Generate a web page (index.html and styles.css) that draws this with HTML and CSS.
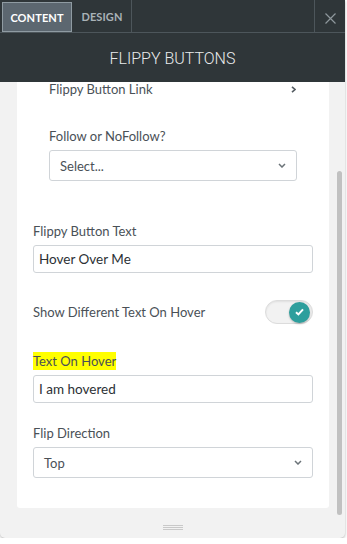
FILE: index.html
```html
<!DOCTYPE html>
<html>
<head>
<meta charset="utf-8">
<link rel="stylesheet" href="styles.css">
</head>
<body>
<div class="panel">
  <div class="header">
    <div class="tabs">
      <div class="tab active">CONTENT</div>
      <div class="tab">DESIGN</div>
      <div class="tab-spacer"></div>
      <div class="close">
        <svg width="11" height="11" viewBox="0 0 11 11"><path d="M0.5 0.5 L10.5 10.5 M10.5 0.5 L0.5 10.5" stroke="#8e979c" stroke-width="1.2" fill="none"/></svg>
      </div>
    </div>
    <div class="title">FLIPPY BUTTONS</div>
  </div>
  <div class="body">
    <div class="card">
      <div class="nested">
        <div class="link-row">
          <span>Flippy Button Link</span>
          <svg class="chev-right" width="5" height="7" viewBox="0 0 5 7"><path d="M1 0.8 L4 3.5 L1 6.2" stroke="#555d63" stroke-width="1.6" fill="none"/></svg>
        </div>
        <div class="field f-follow">
          <div class="label">Follow or NoFollow?</div>
          <div class="select"><span>Select...</span><svg class="chev-down" width="8" height="5" viewBox="0 0 8 5"><path d="M1 1 L4 4 L7 1" stroke="#6b7378" stroke-width="1.5" fill="none"/></svg></div>
        </div>
      </div>
      <div class="main">
        <div class="field f-text">
          <div class="label">Flippy Button Text</div>
          <div class="input">Hover Over Me</div>
        </div>
        <div class="toggle-row">
          <span class="toggle-label">Show Different Text On Hover</span>
          <div class="toggle">
            <div class="knob">
              <svg width="9" height="8" viewBox="0 0 9 8"><path d="M1 4.2 L3.4 6.4 L8 1.4" stroke="#ffffff" stroke-width="2" fill="none"/></svg>
            </div>
          </div>
        </div>
        <div class="field f-hover">
          <div class="label"><span class="hl">Text On Hover</span></div>
          <div class="input">I am hovered</div>
        </div>
        <div class="field f-flip">
          <div class="label">Flip Direction</div>
          <div class="select"><span>Top</span><svg class="chev-down" width="8" height="5" viewBox="0 0 8 5"><path d="M1 1 L4 4 L7 1" stroke="#6b7378" stroke-width="1.5" fill="none"/></svg></div>
        </div>
      </div>
    </div>
    <div class="scrollbar"><div class="thumb"></div></div>
  </div>
  <div class="footer">
    <div class="handle"></div>
  </div>
</div>
</body>
</html>
```

FILE: styles.css
```css
html, body {
  margin: 0;
  padding: 0;
  background: #ffffff;
}
body {
  font-family: Lato, "Liberation Sans", sans-serif;
}
.panel {
  width: 345px;
  height: 538px;
  background: #f2f2f2;
  border-radius: 0 0 5px 5px;
  box-shadow: 0 1px 3px rgba(0, 0, 0, 0.3);
  display: flex;
  flex-direction: column;
  overflow: hidden;
}
.header {
  height: 82px;
  background: #2f3639;
  flex-shrink: 0;
}
.tabs {
  height: 32px;
  border-bottom: 1px solid #4d565b;
  display: flex;
  box-sizing: content-box;
}
.tab {
  width: 59px;
  height: 32px;
  box-sizing: border-box;
  border-right: 1px solid #4d565b;
  display: flex;
  align-items: center;
  justify-content: center;
  font-size: 11px;
  font-weight: 700;
  color: #a9b2b7;
  letter-spacing: 0.1px;
}
.tab.active {
  width: 70px;
  height: 30px;
  margin: 2px 1px 0 2px;
  background: #5c6770;
  border: 1px solid #8f9ba2;
  color: #ffffff;
}
.tab-spacer {
  flex: 1;
  border-right: 1px solid #4d565b;
}
.close {
  width: 30px;
  display: flex;
  align-items: center;
  justify-content: center;
  padding-top: 4px;
  box-sizing: border-box;
}
.title {
  height: 49px;
  display: flex;
  align-items: center;
  justify-content: center;
  font-family: Roboto, sans-serif;
  font-weight: 300;
  font-size: 16px;
  color: #e9ebec;
  padding-top: 2px;
  box-sizing: border-box;
}
.body {
  flex: 1;
  display: flex;
  padding-left: 17px;
  overflow: hidden;
}
.card {
  width: 312px;
  height: 426px;
  background: #ffffff;
  border-radius: 0 0 3px 3px;
  flex-shrink: 0;
}
.scrollbar {
  width: 5px;
  margin-left: 8px;
  padding-top: 89px;
}
.thumb {
  width: 5px;
  height: 344px;
  background: #c1c1c1;
  border-radius: 3px;
}
.footer {
  height: 21px;
  flex-shrink: 0;
  display: flex;
  justify-content: center;
  padding-top: 8px;
  box-sizing: border-box;
}
.handle {
  width: 20px;
  height: 5px;
  border-top: 1px solid #c9c9c9;
  border-bottom: 1px solid #c9c9c9;
  box-sizing: border-box;
}
.handle::after {
  content: "";
  display: block;
  height: 1px;
  margin-top: 1px;
  background: #c9c9c9;
}
.nested {
  padding: 0 32px;
}
.link-row {
  height: 12px;
  display: flex;
  align-items: center;
  justify-content: space-between;
  font-size: 13px;
  line-height: 12px;
  color: #4a5157;
  padding-right: 1px;
  padding-top: 1px;
}
.chev-right {
  margin-top: 0;
}
.main {
  padding: 0 16px;
}
.label {
  font-size: 13px;
  line-height: 20px;
  color: #4a5157;
  margin-bottom: 4px;
}
.hl {
  background: #ffff00;
  padding: 1px 0;
}
.select {
  height: 31px;
  border: 1px solid #d0d4d8;
  border-radius: 3px;
  box-sizing: border-box;
  display: flex;
  align-items: center;
  justify-content: space-between;
  padding: 0 10px;
  font-size: 13px;
  color: #4a5157;
}
.input {
  height: 28px;
  border: 1px solid #d0d4d8;
  border-radius: 3px;
  box-sizing: border-box;
  display: flex;
  align-items: center;
  padding: 0 5px;
  font-size: 13.5px;
  color: #2c3135;
}
.f-follow {
  margin-top: 31px;
}
.f-text {
  margin-top: 40px;
}
.toggle-row {
  margin-top: 27px;
  height: 24px;
  display: flex;
  align-items: center;
  justify-content: space-between;
}
.toggle-label {
  font-size: 13px;
  line-height: 20px;
  color: #4a5157;
}
.toggle {
  width: 48px;
  height: 24px;
  box-sizing: border-box;
  border-radius: 12px;
  background: #f2f2f2;
  border: 1px solid #dcdcdc;
  box-shadow: inset 0 1px 2px rgba(0, 0, 0, 0.08);
  display: flex;
  align-items: center;
  justify-content: flex-end;
  padding-right: 2px;
}
.knob {
  width: 21px;
  height: 21px;
  border-radius: 50%;
  background: #2e9f9d;
  box-shadow: 0 1px 2px rgba(0, 0, 0, 0.25);
  display: flex;
  align-items: center;
  justify-content: center;
}
.f-hover {
  margin-top: 27px;
}
.f-flip {
  margin-top: 20px;
}
```
